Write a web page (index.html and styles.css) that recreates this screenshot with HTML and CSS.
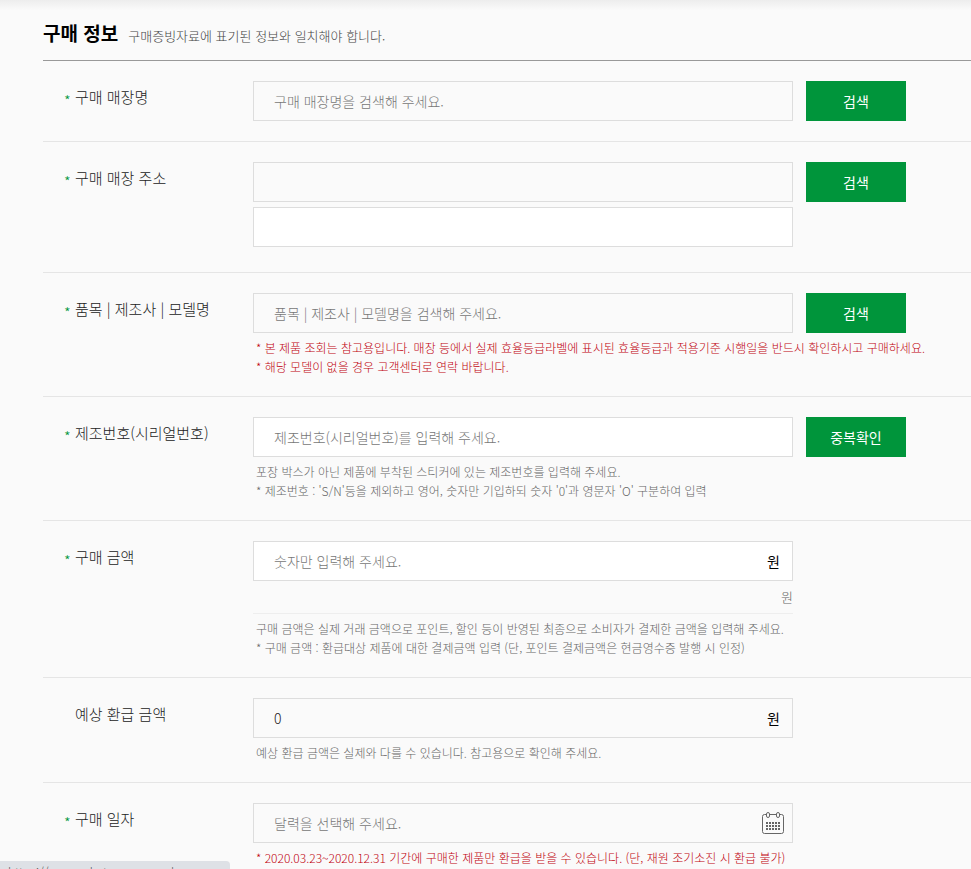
FILE: index.html
```html
<!DOCTYPE html>
<html lang="ko">
<head>
  <meta charset="UTF-8" />
  <meta name="viewport" content="width=device-width, initial-scale=1.0"/>
  <title>구매 정보</title>
  <link rel="stylesheet" href="styles.css">
</head>
<body>
  <form class="purchase">
    <div class="title">
      <h2>구매 정보</h2>
      <p>구매증빙자료에 표기된 정보와 일치해야 합니다.</p>
    </div>

    <div class="row">
      <label class="name required" for="shop">구매 매장명</label>
      <div class="cell">
        <div class="line">
          <input type="text" id="shop" class="text locked" placeholder="구매 매장명을 검색해 주세요." readonly>
          <button type="button" class="btn">검색</button>
        </div>
      </div>
    </div>

    <div class="row">
      <label class="name required" for="addr1">구매 매장 주소</label>
      <div class="cell address">
        <div class="line">
          <input type="text" id="addr1" class="text locked" readonly>
          <button type="button" class="btn">검색</button>
        </div>
        <div class="line">
          <input type="text" id="addr2" class="text" aria-label="상세 주소">
        </div>
      </div>
    </div>

    <div class="row">
      <label class="name required" for="model">품목 | 제조사 | 모델명</label>
      <div class="cell">
        <div class="line">
          <input type="text" id="model" class="text locked" placeholder="품목 | 제조사 | 모델명을 검색해 주세요." readonly>
          <button type="button" class="btn">검색</button>
        </div>
        <div class="note red">
          <p>* 본 제품 조회는 참고용입니다. 매장 등에서 실제 효율등급라벨에 표시된 효율등급과 적용기준 시행일을 반드시 확인하시고 구매하세요.</p>
          <p>* 해당 모델이 없을 경우 고객센터로 연락 바랍니다.</p>
        </div>
      </div>
    </div>

    <div class="row">
      <label class="name required" for="serial">제조번호(시리얼번호)</label>
      <div class="cell">
        <div class="line">
          <input type="text" id="serial" class="text" placeholder="제조번호(시리얼번호)를 입력해 주세요.">
          <button type="button" class="btn">중복확인</button>
        </div>
        <div class="note">
          <p>포장 박스가 아닌 제품에 부착된 스티커에 있는 제조번호를 입력해 주세요.</p>
          <p>* 제조번호 : 'S/N'등을 제외하고 영어, 숫자만 기입하되 숫자 '0'과 영문자 'O' 구분하여 입력</p>
        </div>
      </div>
    </div>

    <div class="row">
      <label class="name required" for="price">구매 금액</label>
      <div class="cell">
        <div class="box">
          <input type="text" id="price" placeholder="숫자만 입력해 주세요.">
          <span class="unit">원</span>
        </div>
        <p class="korean-won">원</p>
        <div class="note">
          <p>구매 금액은 실제 거래 금액으로 포인트, 할인 등이 반영된 최종으로 소비자가 결제한 금액을 입력해 주세요.</p>
          <p>* 구매 금액 : 환급대상 제품에 대한 결제금액 입력 (단, 포인트 결제금액은 현금영수증 발행 시 인정)</p>
        </div>
      </div>
    </div>

    <div class="row">
      <label class="name" for="refund">예상 환급 금액</label>
      <div class="cell">
        <div class="box locked">
          <input type="text" id="refund" value="0" readonly>
          <span class="unit">원</span>
        </div>
        <div class="note">
          <p>예상 환급 금액은 실제와 다를 수 있습니다. 참고용으로 확인해 주세요.</p>
        </div>
      </div>
    </div>

    <div class="row">
      <label class="name required" for="date">구매 일자</label>
      <div class="cell">
        <div class="box locked">
          <input type="text" id="date" placeholder="달력을 선택해 주세요." readonly>
          <button type="button" class="calendar" aria-label="달력">
            <svg width="22" height="22" viewBox="0 0 22 22" fill="none" stroke="#666">
              <path d="M4 2.5H2.5a2 2 0 0 0-2 2v15a2 2 0 0 0 2 2h17a2 2 0 0 0 2-2v-15a2 2 0 0 0-2-2H18M8 2.5h6"/>
              <rect x="4.5" y="0.5" width="3" height="5" rx="1.5"/>
              <rect x="14.5" y="0.5" width="3" height="5" rx="1.5"/>
              <path stroke-width="2" stroke-dasharray="2 1" d="M4 11h14M4 14h14M4 17h14"/>
            </svg>
          </button>
        </div>
        <div class="note red">
          <p>* 2020.03.23~2020.12.31 기간에 구매한 제품만 환급을 받을 수 있습니다. (단, 재원 조기소진 시 환급 불가)</p>
        </div>
      </div>
    </div>
  </form>

  <div class="status">https://www.rebate.energy.or.kr</div>
</body>
</html>
```

FILE: styles.css
```css
* {
  box-sizing: border-box;
}

body {
  margin: 0;
  font-family: "Noto Sans CJK KR", sans-serif;
  font-weight: 300;
  color: #222;
  background: #fafafa linear-gradient(#ededed, #fafafa) no-repeat;
  background-size: 100% 10px;
}

h2, p {
  margin: 0;
}

input, button {
  font: inherit;
}

.purchase {
  padding-left: 43px;
}

.title {
  display: flex;
  align-items: baseline;
  gap: 10px;
  height: 61px;
  padding-top: 18px;
  border-bottom: 1px solid #999;
}

.title h2 {
  font-size: 19px;
  line-height: 30px;
  font-weight: 700;
  color: #000;
}

.title p {
  font-size: 13px;
  color: #444;
}

.row {
  display: flex;
  padding: 20px 0;
  border-bottom: 1px solid #e5e5e5;
}

.row:last-child {
  padding-bottom: 0;
  border-bottom: 0;
}

.name {
  flex: none;
  width: 210px;
  padding-left: 32px;
  font-size: 15px;
  line-height: 32px;
}

.required {
  padding-left: 21px;
}

.required::before {
  content: "*";
  display: inline-block;
  width: 11px;
  line-height: 20px;
  vertical-align: -4px;
  color: #00953b;
}

.cell {
  flex: 1;
  min-width: 0;
}

.address {
  display: flex;
  flex-direction: column;
  gap: 5px;
  padding-bottom: 5px;
}

.line {
  display: flex;
  gap: 13px;
}

.text,
.box {
  width: 100%;
  max-width: 540px;
  height: 40px;
  border: 1px solid #ddd;
  background: #fff;
}

.text {
  padding: 0 20px;
  font-size: 14px;
  color: #222;
}

.box {
  display: flex;
  align-items: center;
  padding: 0 8px 0 20px;
}

.box input {
  flex: 1;
  min-width: 0;
  padding: 0;
  border: 0;
  background: none;
  font-size: 14px;
  color: #222;
}

.text.locked,
.box.locked {
  background: #fafafa;
}

input::placeholder {
  color: #777;
  opacity: 1;
}

.unit {
  padding-right: 4px;
  font-size: 14px;
  font-weight: 400;
  color: #000;
}

.btn {
  flex: none;
  width: 100px;
  height: 40px;
  padding: 0;
  border: 0;
  background: #00953b;
  color: #fff;
  font-size: 14px;
  font-weight: 400;
}

.calendar {
  padding: 0;
  border: 0;
  background: none;
}

.calendar svg {
  display: block;
}

.korean-won {
  max-width: 540px;
  height: 33px;
  border-bottom: 1px solid #eee;
  font-size: 13px;
  line-height: 32px;
  text-align: right;
  color: #666;
}

.note {
  padding: 5px 0 0 3px;
  font-size: 12px;
  line-height: 19px;
  color: #666;
}

.red {
  color: #c0000c;
}

/* link address bubble in the window corner */
.status {
  position: fixed;
  left: 0;
  bottom: 0;
  width: 230px;
  height: 8px;
  padding: 3px 8px 0;
  overflow: hidden;
  border-radius: 0 4px 0 0;
  background: #dee1e6;
  font-size: 12px;
  line-height: 16px;
  color: #555;
}
```
